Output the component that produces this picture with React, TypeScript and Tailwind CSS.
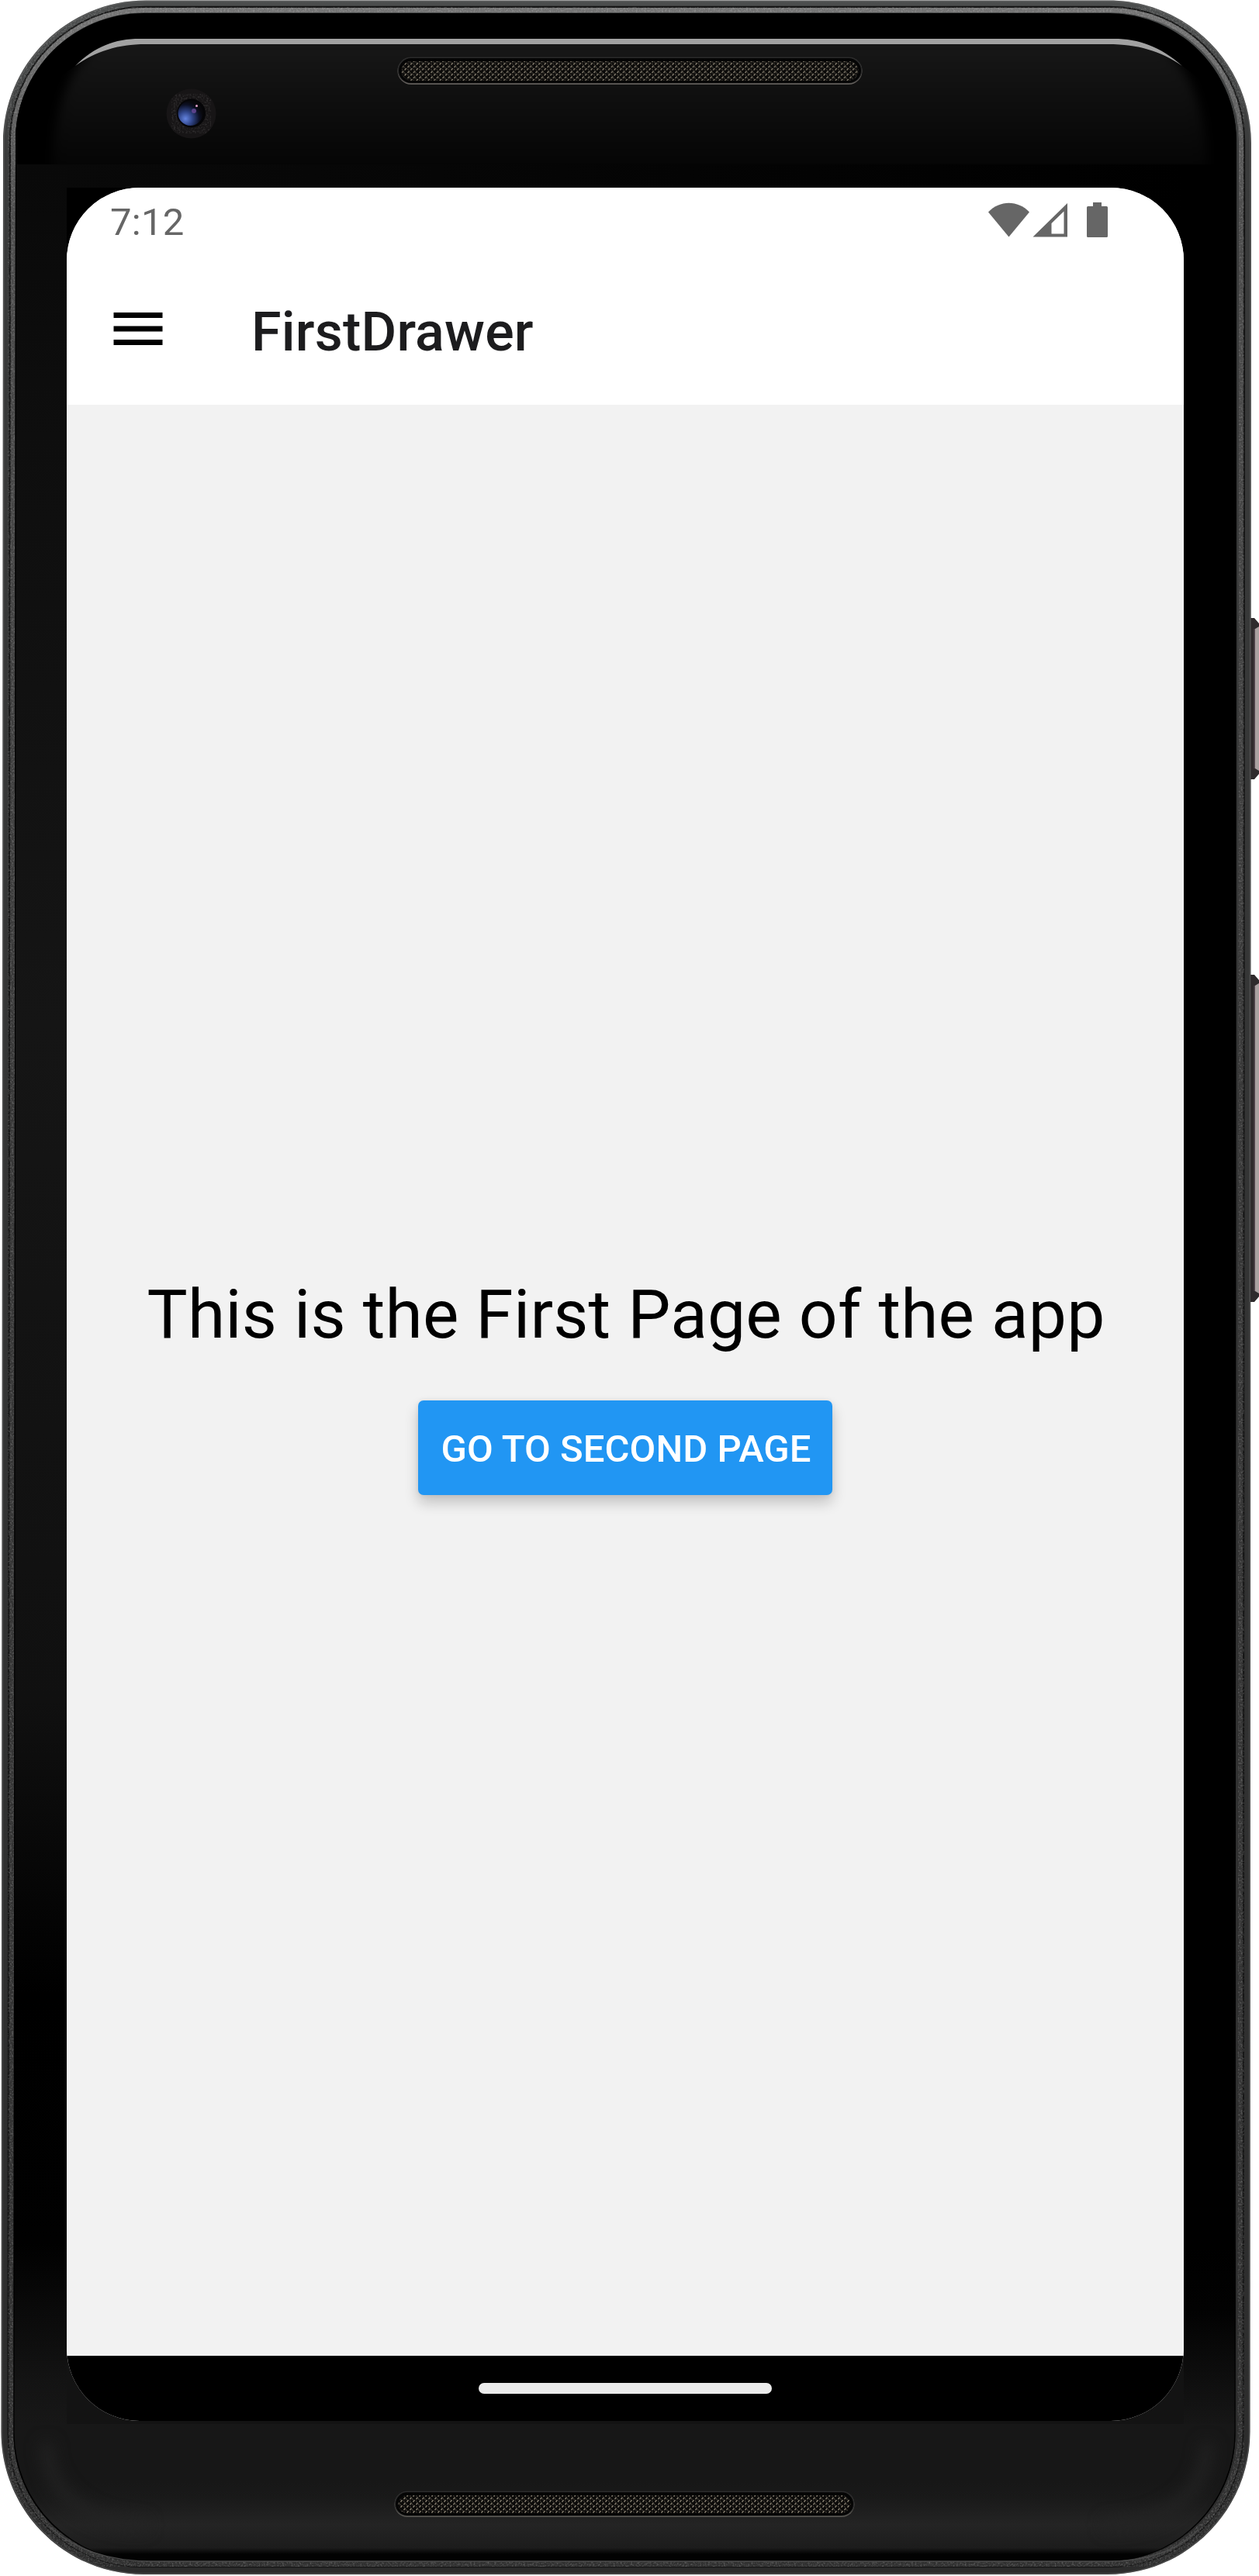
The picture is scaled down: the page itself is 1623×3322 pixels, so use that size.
import React from "react";

function bodyPath(l: number, t: number, r: number, b: number, rad: number, shift = 2.5) {
  const k = rad * 0.4477;
  const bl = l - shift;
  const br = r - shift + 1;
  return `M${l + rad} ${t} H${r - rad} C${r - k} ${t} ${r} ${t + k} ${r} ${t + rad} L${br} ${b - rad} C${br} ${b - k} ${br - k} ${b} ${br - rad} ${b} H${bl + rad} C${bl + k} ${b} ${bl} ${b - k} ${bl} ${b - rad} L${l} ${t + rad} C${l} ${t + k} ${l + k} ${t} ${l + rad} ${t} Z`;
}

function Grille({ x, y, w, h, id, step, edge }: { x: number; y: number; w: number; h: number; id: string; step: number; edge: string }) {
  return (
    <g>
      <defs>
        <pattern id={id} width={step} height="7" patternUnits="userSpaceOnUse">
          <rect width={step} height="7" fill="#0b0a09" />
          <path d={`M0.5 3 L2.5 0.5 M${step / 2 + 0.5} 6.5 L${step / 2 + 2.5} 4`} stroke="#8d8575" strokeWidth="1.3" />
          <path d={`M2.5 1 L${step / 2 + 0.5} 4 M0 4.5 L1.5 6.5`} stroke="#403c35" strokeWidth="1.2" />
        </pattern>
      </defs>
      <rect x={x} y={y} width={w} height={h} rx={h / 2} fill={edge} />
      <rect x={x} y={y - 0.5} width={w} height={h - 1} rx={h / 2} fill="#2b2b2b" />
      <rect x={x + 1.5} y={y + 1} width={w - 3} height={h - 3} rx={h / 2 - 1.5} fill="#050505" />
      <rect x={x + 5} y={y + 5} width={w - 10} height={h - 10} rx={h / 2 - 5} fill={`url(#${id})`} />
    </g>
  );
}

function SideButton({ y, h }: { y: number; h: number }) {
  return (
    <g>
      <path d={`M1611 ${y} h6 l6 7 v${h - 14} l-6 7 h-6 Z`} fill="#2f2a2c" />
      <path d={`M1618 ${y + 14} l5 -3 v${h - 22} l-5 -3 Z`} fill="#aaa1a1" />
      <rect x="1616.500" y={y + 14} width="1.500" height={h - 28} fill="#55484f" />
    </g>
  );
}

function DeviceBody() {
  return (
    <svg className="absolute inset-0" width="1623" height="3322" viewBox="0 0 1623 3322" aria-hidden="true">
      <defs>
        <linearGradient id="rim" x1="0" y1="0" x2="0" y2="1">
          <stop offset="0" stopColor="#4c4e4e" />
          <stop offset="0.06" stopColor="#3a3b3b" />
          <stop offset="1" stopColor="#2c2c2c" />
        </linearGradient>
        <linearGradient id="bevel" x1="0" y1="0" x2="0" y2="1">
          <stop offset="0" stopColor="#747474" />
          <stop offset="0.08" stopColor="#4c4c4c" />
          <stop offset="0.4" stopColor="#383838" />
          <stop offset="1" stopColor="#303030" />
        </linearGradient>
        <linearGradient id="topGlass" x1="0" y1="57" x2="0" y2="212" gradientUnits="userSpaceOnUse">
          <stop offset="0" stopColor="#171717" />
          <stop offset="1" stopColor="#050505" />
        </linearGradient>
        <linearGradient id="underTop" x1="80" y1="0" x2="1530" y2="0" gradientUnits="userSpaceOnUse">
          <stop offset="0" stopColor="#090909" />
          <stop offset="1" stopColor="#000000" />
        </linearGradient>
        <linearGradient id="leftGlass" x1="0" y1="212" x2="0" y2="3126" gradientUnits="userSpaceOnUse">
          <stop offset="0" stopColor="#090909" />
          <stop offset="0.12" stopColor="#0e0e0e" />
          <stop offset="0.38" stopColor="#151515" />
          <stop offset="0.68" stopColor="#101010" />
          <stop offset="0.81" stopColor="#000000" />
          <stop offset="0.92" stopColor="#010101" />
          <stop offset="0.98" stopColor="#131313" />
          <stop offset="1" stopColor="#171717" />
        </linearGradient>
        <linearGradient id="rightGlass" x1="0" y1="2900" x2="0" y2="3126" gradientUnits="userSpaceOnUse">
          <stop offset="0" stopColor="#000000" />
          <stop offset="0.35" stopColor="#020202" />
          <stop offset="1" stopColor="#161616" />
        </linearGradient>
        <linearGradient id="bottomGlass" x1="0" y1="3200" x2="0" y2="3302" gradientUnits="userSpaceOnUse">
          <stop offset="0" stopColor="#171717" />
          <stop offset="0.2" stopColor="#191919" />
          <stop offset="0.55" stopColor="#242424" />
          <stop offset="0.84" stopColor="#1c1c1c" />
          <stop offset="0.92" stopColor="#020202" />
        </linearGradient>
        <radialGradient id="lens" cx="0.3" cy="0.72" r="0.7">
          <stop offset="0" stopColor="#6484e0" />
          <stop offset="0.4" stopColor="#304588" />
          <stop offset="0.8" stopColor="#0c1024" />
          <stop offset="1" stopColor="#08080c" />
        </radialGradient>
        <filter id="soft" x="-5%" y="-30%" width="110%" height="160%" colorInterpolationFilters="sRGB">
          <feGaussianBlur stdDeviation="10" />
        </filter>
        <filter id="softEdge" x="-5%" y="-20%" width="110%" height="140%" colorInterpolationFilters="sRGB">
          <feGaussianBlur stdDeviation="7" />
        </filter>
        <filter id="grain" x="0" y="0" width="100%" height="100%">
          <feTurbulence type="fractalNoise" baseFrequency="0.45" numOctaves="2" seed="4" />
          <feColorMatrix values="0 0 0 0 1  0 0 0 0 1  0 0 0 0 1  1.6 0 0 0 -0.7" />
          <feComposite in2="SourceGraphic" operator="in" />
        </filter>
        <clipPath id="glassClip">
          <path d={bodyPath(20, 18, 1594, 3302, 164)} />
        </clipPath>
        <clipPath id="topClip">
          <path d="M0 212 V150 L97 85 C124 66 152 57 188 57 H1428 C1468 57 1496 66 1524 85 L1613 150 V212 Z" />
        </clipPath>
      </defs>

      <SideButton y={797} h={208} />
      <SideButton y={1257} h={422} />

      <path d={bodyPath(4, 0.5, 1613, 3320, 184)} fill="url(#rim)" />
      <path d={bodyPath(5, 1.5, 1612, 3319, 183)} fill="none" stroke="#6e6e6e" strokeWidth="1.500" opacity="0.45" />
      <path d={bodyPath(13, 9, 1604, 3310, 174)} fill="none" stroke="#161616" strokeWidth="2.500" />
      <path d={bodyPath(17, 13, 1600, 3307, 169)} fill="none" stroke="url(#bevel)" strokeWidth="6" />
      <path d={bodyPath(13, 9, 1604, 3310, 173)} fill="none" stroke="#fff" strokeWidth="14" filter="url(#grain)" opacity="0.32" />
      <path d={bodyPath(20, 17, 1594, 3303, 165)} fill="#000" />

      <g clipPath="url(#glassClip)">
        <g clipPath="url(#topClip)">
          <path
            d="M66 250 C66 150 84 104 110 74 L150 20 H1470 L1512 74 C1540 104 1558 150 1558 250 Z"
            fill="url(#topGlass)"
            filter="url(#softEdge)"
          />
        </g>
        <rect x="80" y="212" width="1450" height="60" fill="url(#underTop)" />
        <rect x="0" y="212" width="86" height="2914" fill="url(#leftGlass)" />
        <rect x="86" y="242" width="100" height="100" fill="#000" />
        <rect x="1520" y="2900" width="90" height="226" fill="url(#rightGlass)" />
        <rect x="86" y="3030" width="1440" height="96" fill="#131313" />
        <rect x="0" y="3126" width="1610" height="80" fill="#171717" />
        <rect x="0" y="3200" width="1610" height="103" fill="url(#bottomGlass)" />
        <path d="M60 3150 C60 3215 110 3256 190 3256 M1423 3256 C1505 3256 1556 3215 1556 3150" fill="none" stroke="#242424" strokeWidth="14" filter="url(#soft)" />
        <path d={bodyPath(18, 10, 1596, 3306, 170)} fill="none" stroke="#000" strokeWidth="6" />
      </g>
      <path d="M64 3259 C100 3291 145 3303 195 3303 H1430 C1480 3303 1520 3288 1545 3262" fill="none" stroke="#4c4c4c" strokeWidth="1.500" />

      <path
        d="M97 85 C122 60 148 50 180 50 H1436 C1468 50 1496 60 1524 85 C1496 66 1468 57 1428 57 H188 C152 57 124 66 97 85 Z"
        fill="#a2a2a2"
      />

      <Grille id="meshTop" x={512.5} y={74} w={599} h={35} step={7.5} edge="#66625e" />
      <Grille id="meshBottom" x={508.5} y={3213} w={593} h={33} step={8} edge="#5a5853" />

      <circle cx="246.500" cy="146.500" r="32" fill="#171516" />
      <circle cx="246.500" cy="146.500" r="25" fill="none" stroke="#fff" strokeWidth="13" filter="url(#grain)" opacity="0.18" />
      <circle cx="246.500" cy="146" r="18.500" fill="#050507" />
      <circle cx="245.500" cy="146" r="16" fill="url(#lens)" />
      <circle cx="250" cy="143" r="3" fill="#6a4a9a" opacity="0.8" />
      <circle cx="253.500" cy="136.500" r="1.500" fill="#e6a6cd" />
    </svg>
  );
}

function StatusIcons() {
  return (
    <svg className="h-[46px] w-[156px]" viewBox="1273 261 156 46" fill="#666666" aria-hidden="true">
      <path d="M1274 273.500 C1289 257.800 1312 257.800 1327 273.500 L1300.500 305.500 Z" />
      <path fillRule="evenodd" d="M1331.500 305.500 L1376 262 V305.500 Z M1355.500 301.500 H1371.500 V272.500 L1355.500 288 Z" />
      <path d="M1409 261 h11 v5 h6.500 q1.500 0 1.500 1.500 V304.500 q0 1.500 -1.500 1.500 h-24 q-1.500 0 -1.500 -1.500 V267.500 q0 -1.500 1.500 -1.500 h6.500 Z" />
    </svg>
  );
}

function StatusBar() {
  return (
    <div className="flex h-[84px] items-start justify-between pl-[56px] pr-[97px] pt-[19px]">
      <span className="-mt-[4px] text-[49px] leading-[60px] tracking-[0.3px] text-[#666666]">7:12</span>
      <StatusIcons />
    </div>
  );
}

function AppHeader() {
  return (
    <header className="flex h-[196px] items-center pl-[50px]">
      <button aria-label="Open drawer" className="h-[84px] w-[84px]">
        <svg className="h-[84px] w-[84px]" viewBox="0 0 24 24" fill="#000">
          <path d="M3 6h18v2H3zM3 11h18v2H3zM3 16h18v2H3z" />
        </svg>
      </button>
      <h1 className="ml-[104px] pt-[7px] text-[70px] font-medium leading-[82px] tracking-[0.2px] text-[#1c1c1e]">FirstDrawer</h1>
    </header>
  );
}

export default function App() {
  return (
    <div className="relative h-[3322px] w-[1623px] overflow-hidden bg-white font-['Roboto',sans-serif]">
      <DeviceBody />
      <div className="relative pl-[86px] pt-[242px]">
        <div className="flex h-[2880px] w-[1440px] flex-col overflow-hidden rounded-[94px] bg-white">
          <div className="h-[280px] bg-white">
            <StatusBar />
            <AppHeader />
          </div>
          <main className="flex flex-1 flex-col items-center bg-[#f2f2f2] pt-[1122px]">
            <p className="whitespace-nowrap pl-[2px] text-[87.5px] leading-[103px] tracking-[0.19px] text-black">This is the First Page of the app</p>
            <button className="mt-[59px] h-[122px] w-[534px] whitespace-nowrap rounded-[7px] bg-[#2196f3] pl-[2px] pt-[3px] text-[49px] font-medium tracking-[0.05px] text-white shadow-[0_10px_18px_rgba(0,0,0,0.2),0_0_6px_rgba(0,0,0,0.08)]">
              GO TO SECOND PAGE
            </button>
          </main>
          <nav className="flex h-[84px] items-center justify-center bg-black">
            <div className="h-[14px] w-[378px] rounded-full bg-[#ebebeb]" />
          </nav>
        </div>
      </div>
    </div>
  );
}
